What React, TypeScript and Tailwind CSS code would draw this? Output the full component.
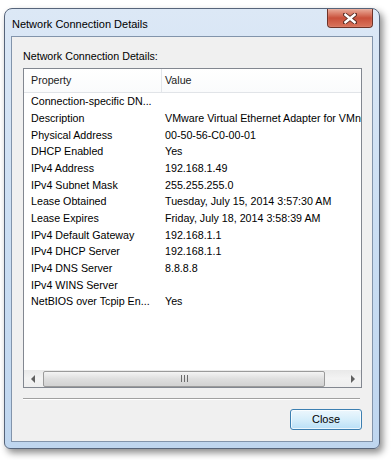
import React from 'react';

const rows: [string, string][] = [
  ['Connection-specific DN...', ''],
  ['Description', 'VMware Virtual Ethernet Adapter for VMnet8'],
  ['Physical Address', '00-50-56-C0-00-01'],
  ['DHCP Enabled', 'Yes'],
  ['IPv4 Address', '192.168.1.49'],
  ['IPv4 Subnet Mask', '255.255.255.0'],
  ['Lease Obtained', 'Tuesday, July 15, 2014 3:57:30 AM'],
  ['Lease Expires', 'Friday, July 18, 2014 3:58:39 AM'],
  ['IPv4 Default Gateway', '192.168.1.1'],
  ['IPv4 DHCP Server', '192.168.1.1'],
  ['IPv4 DNS Server', '8.8.8.8'],
  ['IPv4 WINS Server', ''],
  ['NetBIOS over Tcpip En...', 'Yes'],
];

const CloseGlyph = () => (
  <svg width="14" height="11" viewBox="0 0 14 11">
    <path d="M2 1.5 L12 9.5 M12 1.5 L2 9.5" stroke="#5a2a22" strokeWidth="4.2" strokeLinecap="square" />
    <path d="M2.4 1.8 L11.6 9.2 M11.6 1.8 L2.4 9.2" stroke="#ffffff" strokeWidth="2.4" strokeLinecap="square" />
  </svg>
);

const App: React.FC = () => {
  return (
    <div
      className="w-[391px] h-[460px] bg-white overflow-hidden text-[10.7px] text-black"
      style={{ fontFamily: '"Liberation Sans", Arial, sans-serif' }}
    >
      {/* Window frame */}
      <div className="ml-[4px] mt-[8px] w-[376px] h-[441px] rounded-t-[8px] rounded-b-[6px] border border-[#56647a] bg-gradient-to-b from-[#dce8f6] via-[#cbdef3] to-[#bfd6ef] shadow-[3px_4px_7px_rgba(0,0,0,0.45)] flex flex-col">
        {/* Title bar */}
        <div className="h-[27px] flex items-start justify-between pl-[7px] pr-[6px]">
          <span className="mt-[8px] leading-[15px] text-[11px] text-black">Network Connection Details</span>
          <div className="w-[46px] h-[19px] rounded-b-[4px] border border-t-0 border-[#6e3328] bg-gradient-to-b from-[#e9ab9a] via-[#c9503b] to-[#d9745c] flex items-center justify-center shadow-[inset_0_0_1px_rgba(255,255,255,0.7)]">
            <CloseGlyph />
          </div>
        </div>

        {/* Client area */}
        <div className="flex-1 mx-[6px] mb-[6px] border border-[#8294ab] bg-[#f0f0f0] flex flex-col pl-[11px] pr-[10px]">
          <div className="pt-[12px] leading-[15px]">Network Connection Details:</div>

          {/* List view */}
          <div className="mt-[4px] h-[320px] border border-[#828790] bg-white flex flex-col">
            <div className="h-[24px] shrink-0 grid grid-cols-[138px_1fr] border-b border-[#e1e4e8] bg-gradient-to-b from-white to-[#fafbfc]">
              <div className="pl-[7px] flex items-center border-r border-[#e3e6ea] text-[#1b1b1b]">Property</div>
              <div className="pl-[3px] flex items-center text-[#1b1b1b]">Value</div>
            </div>
            <div className="flex-1 overflow-hidden">
              {rows.map(([k, v], i) => (
                <div key={i} className="h-[16.67px] grid grid-cols-[138px_1fr] items-center whitespace-nowrap overflow-hidden">
                  <div className="pl-[7px]">{k}</div>
                  <div className="pl-[3px] overflow-hidden">{v}</div>
                </div>
              ))}
            </div>

            {/* Horizontal scrollbar */}
            <div className="h-[17px] shrink-0 flex items-center bg-gradient-to-b from-[#e9e9e9] via-[#f3f3f3] to-[#eeeeee]">
              <div className="w-[17px] h-full flex items-center justify-center">
                <div className="w-0 h-0 border-y-[4px] border-y-transparent border-r-[4px] border-r-[#606060]" />
              </div>
              <div className="flex-1 h-full flex items-center pl-[2px] pr-[19px]">
                <div className="w-[282px] h-[16px] rounded-[2px] border border-[#9a9a9a] bg-gradient-to-b from-[#f4f4f4] via-[#dedede] to-[#d2d2d2] flex items-center justify-center gap-[2px]">
                  <div className="w-px h-[7px] bg-[#6b6b6b]" />
                  <div className="w-px h-[7px] bg-[#6b6b6b]" />
                  <div className="w-px h-[7px] bg-[#6b6b6b]" />
                </div>
              </div>
              <div className="w-[17px] h-full flex items-center justify-center">
                <div className="w-0 h-0 border-y-[4px] border-y-transparent border-l-[4px] border-l-[#606060]" />
              </div>
            </div>
          </div>

          {/* Separator */}
          <div className="mt-[10px] mr-[2px] h-[2px] border-t border-[#a0a0a0] border-b border-b-white" />

          {/* Buttons */}
          <div className="mt-[9px] flex justify-end">
            <button className="w-[72px] h-[21px] rounded-[3px] border border-[#3c7fb1] bg-gradient-to-b from-[#edf7fd] via-[#d6eefb] to-[#b9e0f7] shadow-[inset_0_0_0_1px_rgba(255,255,255,0.7)] text-[11px] text-black leading-none">
              Close
            </button>
          </div>
        </div>
      </div>
    </div>
  );
};

export default App;
